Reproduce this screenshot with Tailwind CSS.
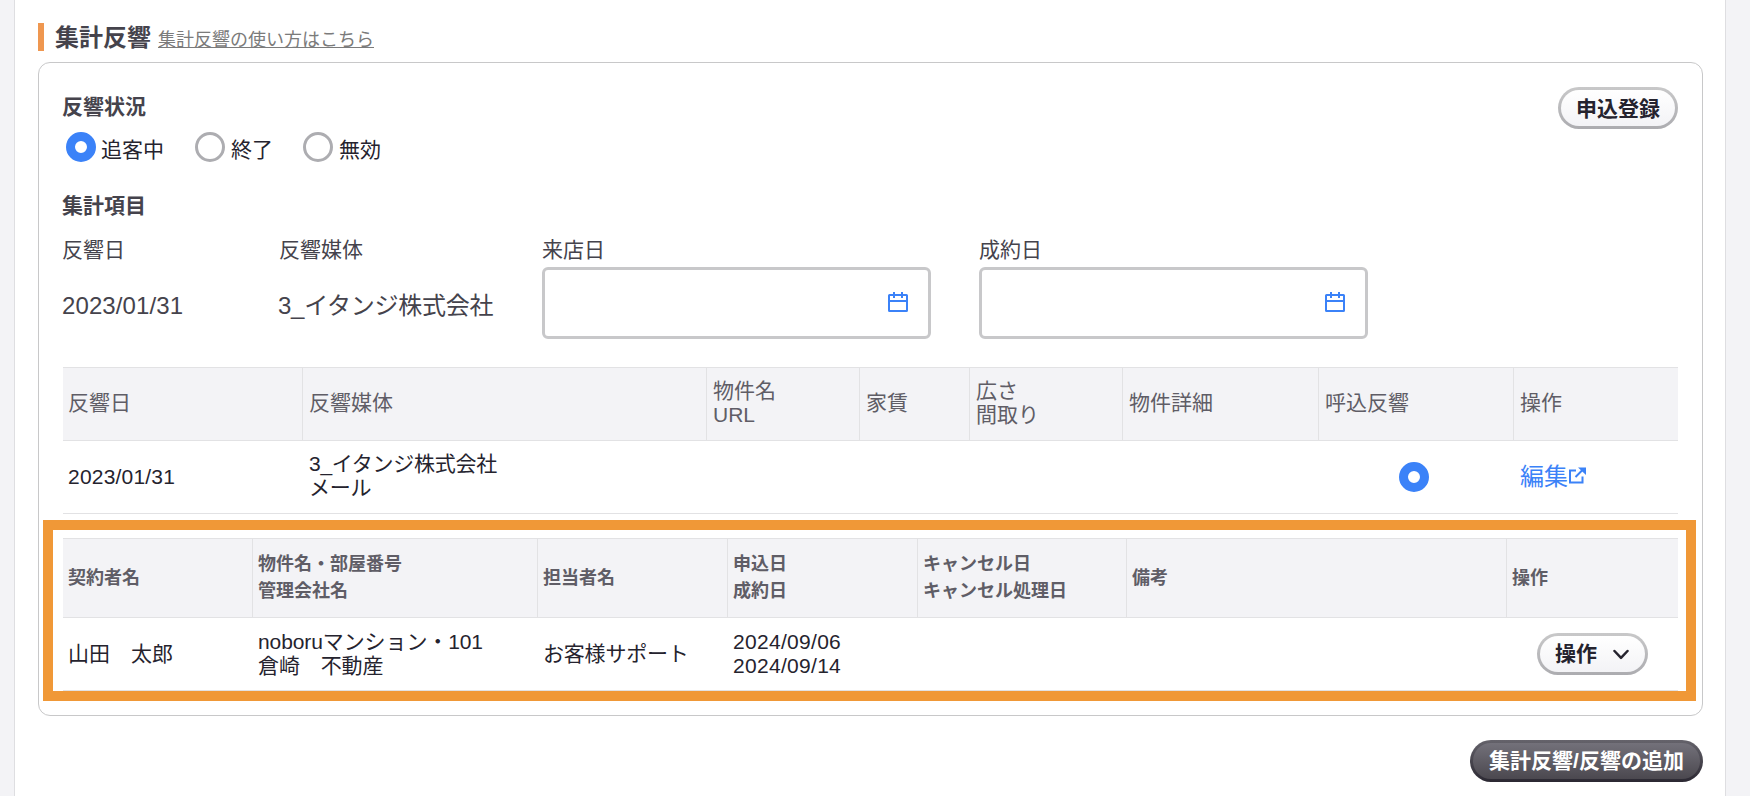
<!DOCTYPE html>
<html lang="ja">
<head>
  <meta charset="UTF-8" />
  <meta name="viewport" content="width=device-width, initial-scale=1.0" />
  <title>集計反響</title>
  <script src="https://cdn.jsdelivr.net/npm/@tailwindcss/browser@4"></script>
  <style>
    body {
      font-family: 'Liberation Sans', 'Noto Sans CJK JP', sans-serif;
    }
    /* pill buttons: the border has its own gradient */
    .pill {
      border: 3px solid transparent;
      background: linear-gradient(#ffffff, #f3f3f6) padding-box, linear-gradient(#c8c8c9, #acacb0) border-box;
    }
    .pill-dark {
      border: 3px solid transparent;
      background: linear-gradient(#73717a, #4b484f) padding-box, linear-gradient(#65636b, #2b2832) border-box;
    }
  </style>
</head>
<body class="bg-[#f3f3f6] text-[21px] leading-6 text-[#25232e]">
  <main class="ml-[14px] w-[1712px] h-[796px] overflow-hidden bg-white border-x border-[#dedee1] pl-[23px] pr-[22px] pt-[23px]">
    <header class="flex items-center h-7 border-l-6 border-[#ef9750] pl-[11px]">
      <h1 class="pt-0.5 text-2xl leading-7 font-bold text-[#45434c]">集計反響</h1>
      <a href="#" class="ml-[7px] mt-[5px] text-lg leading-6 text-[#7b7b7b] underline decoration-1 underline-offset-[1px] [text-decoration-skip-ink:none]">集計反響の使い方はこちら</a>
    </header>

    <section class="mt-[11px] h-[654px] border border-[#c8c8c9] rounded-xl px-6 pt-6">
      <div class="flex justify-between">
        <div>
          <h2 class="mt-2 -ml-px font-bold text-[#45434c]">反響状況</h2>
          <div class="mt-[13px] pl-[3px] flex items-center h-[30px]">
            <label class="flex items-center w-[129px]">
              <span class="size-[30px] rounded-full bg-white border-[9px] border-[#3b82f8]"></span>
              <span class="ml-[5px] mt-1.5">追客中</span>
            </label>
            <label class="flex items-center w-[108px]">
              <span class="size-[30px] rounded-full bg-white border-3 border-[#adadb1]"></span>
              <span class="ml-[6px] mt-1.5">終了</span>
            </label>
            <label class="flex items-center">
              <span class="size-[30px] rounded-full bg-white border-3 border-[#adadb1]"></span>
              <span class="ml-[6px] mt-1.5">無効</span>
            </label>
          </div>
        </div>
        <button class="pill w-[120px] h-[42px] rounded-full pt-0.5 font-bold">申込登録</button>
      </div>

      <h2 class="mt-8 -ml-px font-bold text-[#45434c]">集計項目</h2>
      <div class="mt-5 flex text-[#45434c]">
        <div class="w-[216px]">
          <div class="-ml-px">反響日</div>
          <div class="mt-[5px] -ml-px h-[72px] flex items-center pt-[5px] text-2xl tracking-[0.1px]">2023/01/31</div>
        </div>
        <div class="w-[263px]">
          <div>反響媒体</div>
          <div class="mt-[5px] -ml-px h-[72px] flex items-center pt-[5px] text-2xl tracking-[-0.25px]">3_イタンジ株式会社</div>
        </div>
        <div class="w-[437px]">
          <div>来店日</div>
          <div class="mt-[5px] w-[389px] h-[72px] border-3 border-[#c8c8ca] rounded-md flex items-center justify-end pr-5">
            <svg class="size-5 mt-[-2px]" viewBox="0 0 20 20" fill="none" stroke="#3b82f8" stroke-width="2">
              <rect x="1" y="3" width="18" height="16" rx="0.5" />
              <path d="M1 9H19M6 0V6M14 0V6" />
            </svg>
          </div>
        </div>
        <div>
          <div>成約日</div>
          <div class="mt-[5px] w-[389px] h-[72px] border-3 border-[#c8c8ca] rounded-md flex items-center justify-end pr-5">
            <svg class="size-5 mt-[-2px]" viewBox="0 0 20 20" fill="none" stroke="#3b82f8" stroke-width="2">
              <rect x="1" y="3" width="18" height="16" rx="0.5" />
              <path d="M1 9H19M6 0V6M14 0V6" />
            </svg>
          </div>
        </div>
      </div>

      <table class="mt-7 w-[1615px] table-fixed border-separate border-spacing-0 text-left">
        <colgroup>
          <col class="w-[240px]" /><col class="w-[404px]" /><col class="w-[153px]" /><col class="w-[110px]" />
          <col class="w-[153px]" /><col class="w-[196px]" /><col class="w-[195px]" /><col class="w-[164px]" />
        </colgroup>
        <thead>
          <tr class="h-[74px] bg-[#f3f3f6] text-[#5f5d66] *:border-y *:border-r *:last:border-r-0 *:border-[#e2e2e4] *:px-1.5 *:first:pl-[5px] *:pb-0.5 *:font-normal">
            <th>反響日</th>
            <th>反響媒体</th>
            <th>物件名<br />URL</th>
            <th>家賃</th>
            <th>広さ<br />間取り</th>
            <th>物件詳細</th>
            <th>呼込反響</th>
            <th>操作</th>
          </tr>
        </thead>
        <tbody>
          <tr class="h-[73px] *:border-b *:border-[#e2e2e4] *:px-1.5 *:first:pl-[5px]">
            <td class="tracking-[0.2px]">2023/01/31</td>
            <td class="pb-0.5 tracking-[-0.25px]">3_イタンジ株式会社<br />メール</td>
            <td></td>
            <td></td>
            <td></td>
            <td></td>
            <td><span class="block ml-[74px] size-[30px] rounded-full bg-white border-[9px] border-[#3b82f8]"></span></td>
            <td>
              <a href="#" class="flex items-center text-2xl text-[#3b82f8]">編集
                <svg class="ml-px mt-[-3px] w-[17px] h-[17px]" viewBox="0 0 17 17" fill="none" stroke="#3b82f8" stroke-width="2">
                  <path d="M7 3.5H1V15.5H13.5V9.5M6.5 10L14 2.5" />
                  <path d="M9 0.5H17V8Z" fill="#3b82f8" stroke="none" />
                </svg>
              </a>
            </td>
          </tr>
        </tbody>
      </table>

      <div class="relative mt-6">
        <table class="w-[1615px] table-fixed border-separate border-spacing-0 text-left">
          <colgroup>
            <col class="w-[190px]" /><col class="w-[285px]" /><col class="w-[190px]" /><col class="w-[190px]" />
            <col class="w-[209px]" /><col class="w-[380px]" /><col class="w-[171px]" />
          </colgroup>
          <thead>
            <tr class="h-[80px] bg-[#f3f3f6] text-lg leading-[27px] text-[#5f5d66] *:border-y *:border-r *:last:border-r-0 *:border-[#e2e2e4] *:px-[5px] *:font-bold">
              <th>契約者名</th>
              <th>物件名・部屋番号<br />管理会社名</th>
              <th>担当者名</th>
              <th>申込日<br />成約日</th>
              <th>キャンセル日<br />キャンセル処理日</th>
              <th>備考</th>
              <th>操作</th>
            </tr>
          </thead>
          <tbody>
            <tr class="h-[73px] *:border-b *:border-[#e2e2e4] *:px-[5px]">
              <td>山田　太郎</td>
              <td class="tracking-[-0.1px]">noboruマンション・101<br />倉崎　不動産</td>
              <td class="tracking-[-0.2px]">お客様サポート</td>
              <td class="tracking-[0.3px]">2024/09/06<br />2024/09/14</td>
              <td></td>
              <td></td>
              <td>
                <button class="pill mx-auto w-[111px] h-[42px] rounded-full flex items-center pl-[15px] font-bold">操作
                  <svg class="ml-4 w-4 h-[11px]" viewBox="0 0 16 11" fill="none" stroke="#25232e" stroke-width="2.5" stroke-linecap="round" stroke-linejoin="round">
                    <path d="M1.5 2L8 8.8L14.5 2" />
                  </svg>
                </button>
              </td>
            </tr>
          </tbody>
        </table>
        <!-- highlight frame around the application table -->
        <div class="absolute -top-[18px] -bottom-[10px] -left-5 -right-[18px] border-10 border-[#f09837]"></div>
      </div>
    </section>

    <div class="mt-6 flex justify-end">
      <button class="pill-dark w-[233px] h-[42px] rounded-full font-bold text-white">集計反響/反響の追加</button>
    </div>
  </main>
</body>
</html>
